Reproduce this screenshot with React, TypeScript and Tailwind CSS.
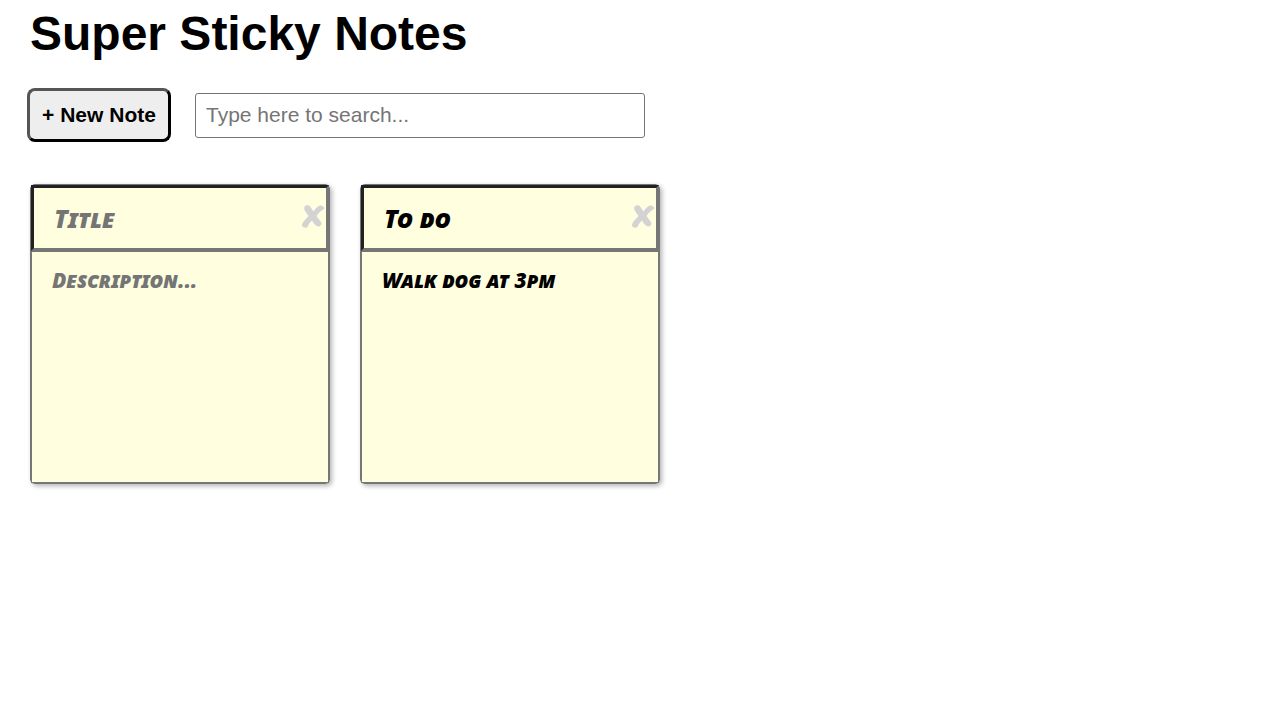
import { useState } from "react";

type Note = { id: number; title: string; description: string };

function DeleteIcon() {
  return (
    <svg width="24" height="26" viewBox="0 0 24 26" fill="#d3d3d3" aria-hidden="true">
      <path d="M5 3C7 1.500 9.500 2 10.500 4L13.500 8.500C15.500 5.500 18 3 20 2.500C22.500 2 24.500 4 24 6C21 7.500 18.500 10 16.500 13L21 19C22.500 21.500 20 24 18 23.500C15.500 23 13.500 20 12 17.500C9.500 20 8 22 7.500 24C5.500 25.500 2 24.500 2 22C2 19.500 6 16 8.500 13L5 8C4 6 4 4 5 3Z" />
    </svg>
  );
}

export default function App() {
  const [search, setSearch] = useState("");
  const [notes, setNotes] = useState<Note[]>([
    { id: 1, title: "", description: "" },
    { id: 2, title: "To do", description: "Walk dog at 3pm" },
  ]);

  const edit = (id: number, change: Partial<Note>) =>
    setNotes((all) => all.map((n) => (n.id === id ? { ...n, ...change } : n)));
  const add = () => setNotes((all) => [{ id: Date.now(), title: "", description: "" }, ...all]);
  const remove = (id: number) => setNotes((all) => all.filter((n) => n.id !== id));
  const shown = notes.filter((n) =>
    (n.title + " " + n.description).toLowerCase().includes(search.toLowerCase()),
  );

  return (
    <div className="min-h-screen bg-white font-['Liberation_Sans',Arial,sans-serif] text-black">
      <header className="px-[27px]">
        <h1 className="px-[3px] pt-1 text-5xl leading-[60px] font-bold">Super Sticky Notes</h1>
        <div className="mt-6 flex items-center gap-6">
          <button
            type="button"
            onClick={add}
            className="h-[54px] w-36 shrink-0 rounded-lg border-3 border-t-[#555] border-r-black border-b-black border-l-[#555] bg-[#eee] text-[21px] font-bold"
          >
            + New Note
          </button>
          <input
            type="text"
            aria-label="Search notes"
            placeholder="Type here to search..."
            value={search}
            onChange={(e) => setSearch(e.target.value)}
            className="h-[45px] w-[450px] min-w-0 rounded-[3px] border border-[#767676] bg-white px-2.5 text-[21px] placeholder:text-[#757575]"
          />
        </div>
      </header>
      <ul className="flex flex-wrap gap-[30px] px-[30px] pt-[42px] pb-8">
        {shown.map((note) => (
          <li
            key={note.id}
            className="flex h-[300px] w-[300px] flex-col rounded-[5px] border border-[#767676] bg-[#ffffdf] font-['Noto_Sans',sans-serif] italic shadow-[2px_2px_5px_rgba(0,0,0,0.3)] [font-variant-caps:small-caps]"
          >
            <div className="flex h-[66px] items-center border-3 border-t-[#212121] border-r-[#767676] border-b-[#767676] border-l-[#212121]">
              <input
                type="text"
                aria-label="Title"
                placeholder="Title"
                value={note.title}
                onChange={(e) => edit(note.id, { title: e.target.value })}
                className="h-full min-w-0 flex-1 pl-5 text-[25px] font-black outline-none placeholder:text-[#757575]"
              />
              <button type="button" aria-label="Delete note" onClick={() => remove(note.id)} className="mr-0.5 mb-1">
                <DeleteIcon />
              </button>
            </div>
            <textarea
              aria-label="Description"
              placeholder="Description..."
              value={note.description}
              onChange={(e) => edit(note.id, { description: e.target.value })}
              className="w-full flex-1 resize-none border border-[#767676] px-5 pt-3 text-[21px] leading-8 font-black outline-none placeholder:text-[#757575]"
            />
          </li>
        ))}
      </ul>
    </div>
  );
}
